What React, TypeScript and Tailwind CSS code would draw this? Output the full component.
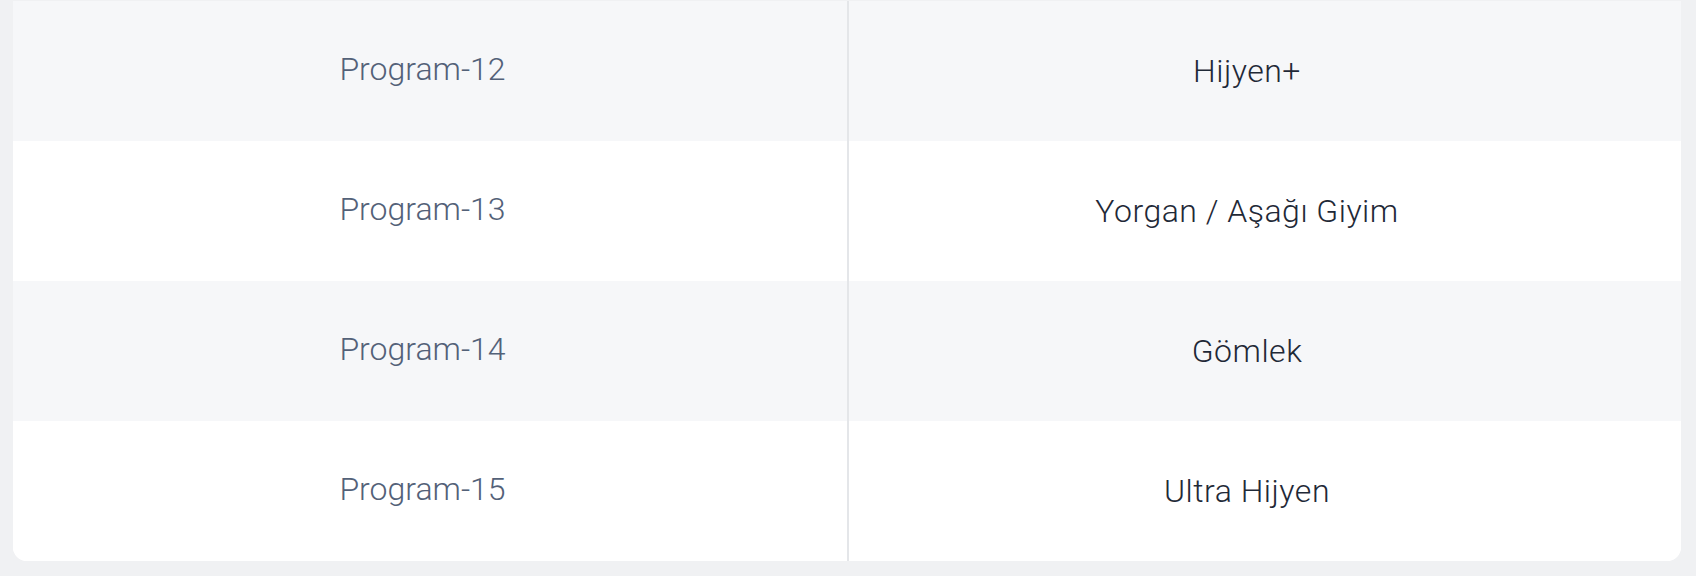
const rows = [
  { program: "Program-12", name: "Hijyen+" },
  { program: "Program-13", name: "Yorgan / Aşağı Giyim" },
  { program: "Program-14", name: "Gömlek" },
  { program: "Program-15", name: "Ultra Hijyen" },
];

export default function App() {
  return (
    <div
      className="min-h-screen bg-[#f0f1f3] pt-px pl-[13px] pr-[15px] pb-[15px]"
      style={{ fontFamily: "Roboto, 'Noto Sans', sans-serif" }}
    >
      <div className="overflow-hidden rounded-b-[14px] bg-white">
        {rows.map((row, i) => (
          <div
            key={row.program}
            className={`grid grid-cols-2 h-[140px] ${i % 2 === 0 ? "bg-[#f6f7f9]" : "bg-white"}`}
          >
            <div className="flex items-center justify-center pr-[15px] pb-[4px] text-[32px] font-light text-[#536178]">
              {row.program}
            </div>
            <div className="flex items-center justify-center border-l-2 border-[#e4e6e9] pr-[36px] pb-[1px] text-[32px] font-light tracking-[0.5px] text-[#1f2937]">
              {row.name}
            </div>
          </div>
        ))}
      </div>
    </div>
  );
}
